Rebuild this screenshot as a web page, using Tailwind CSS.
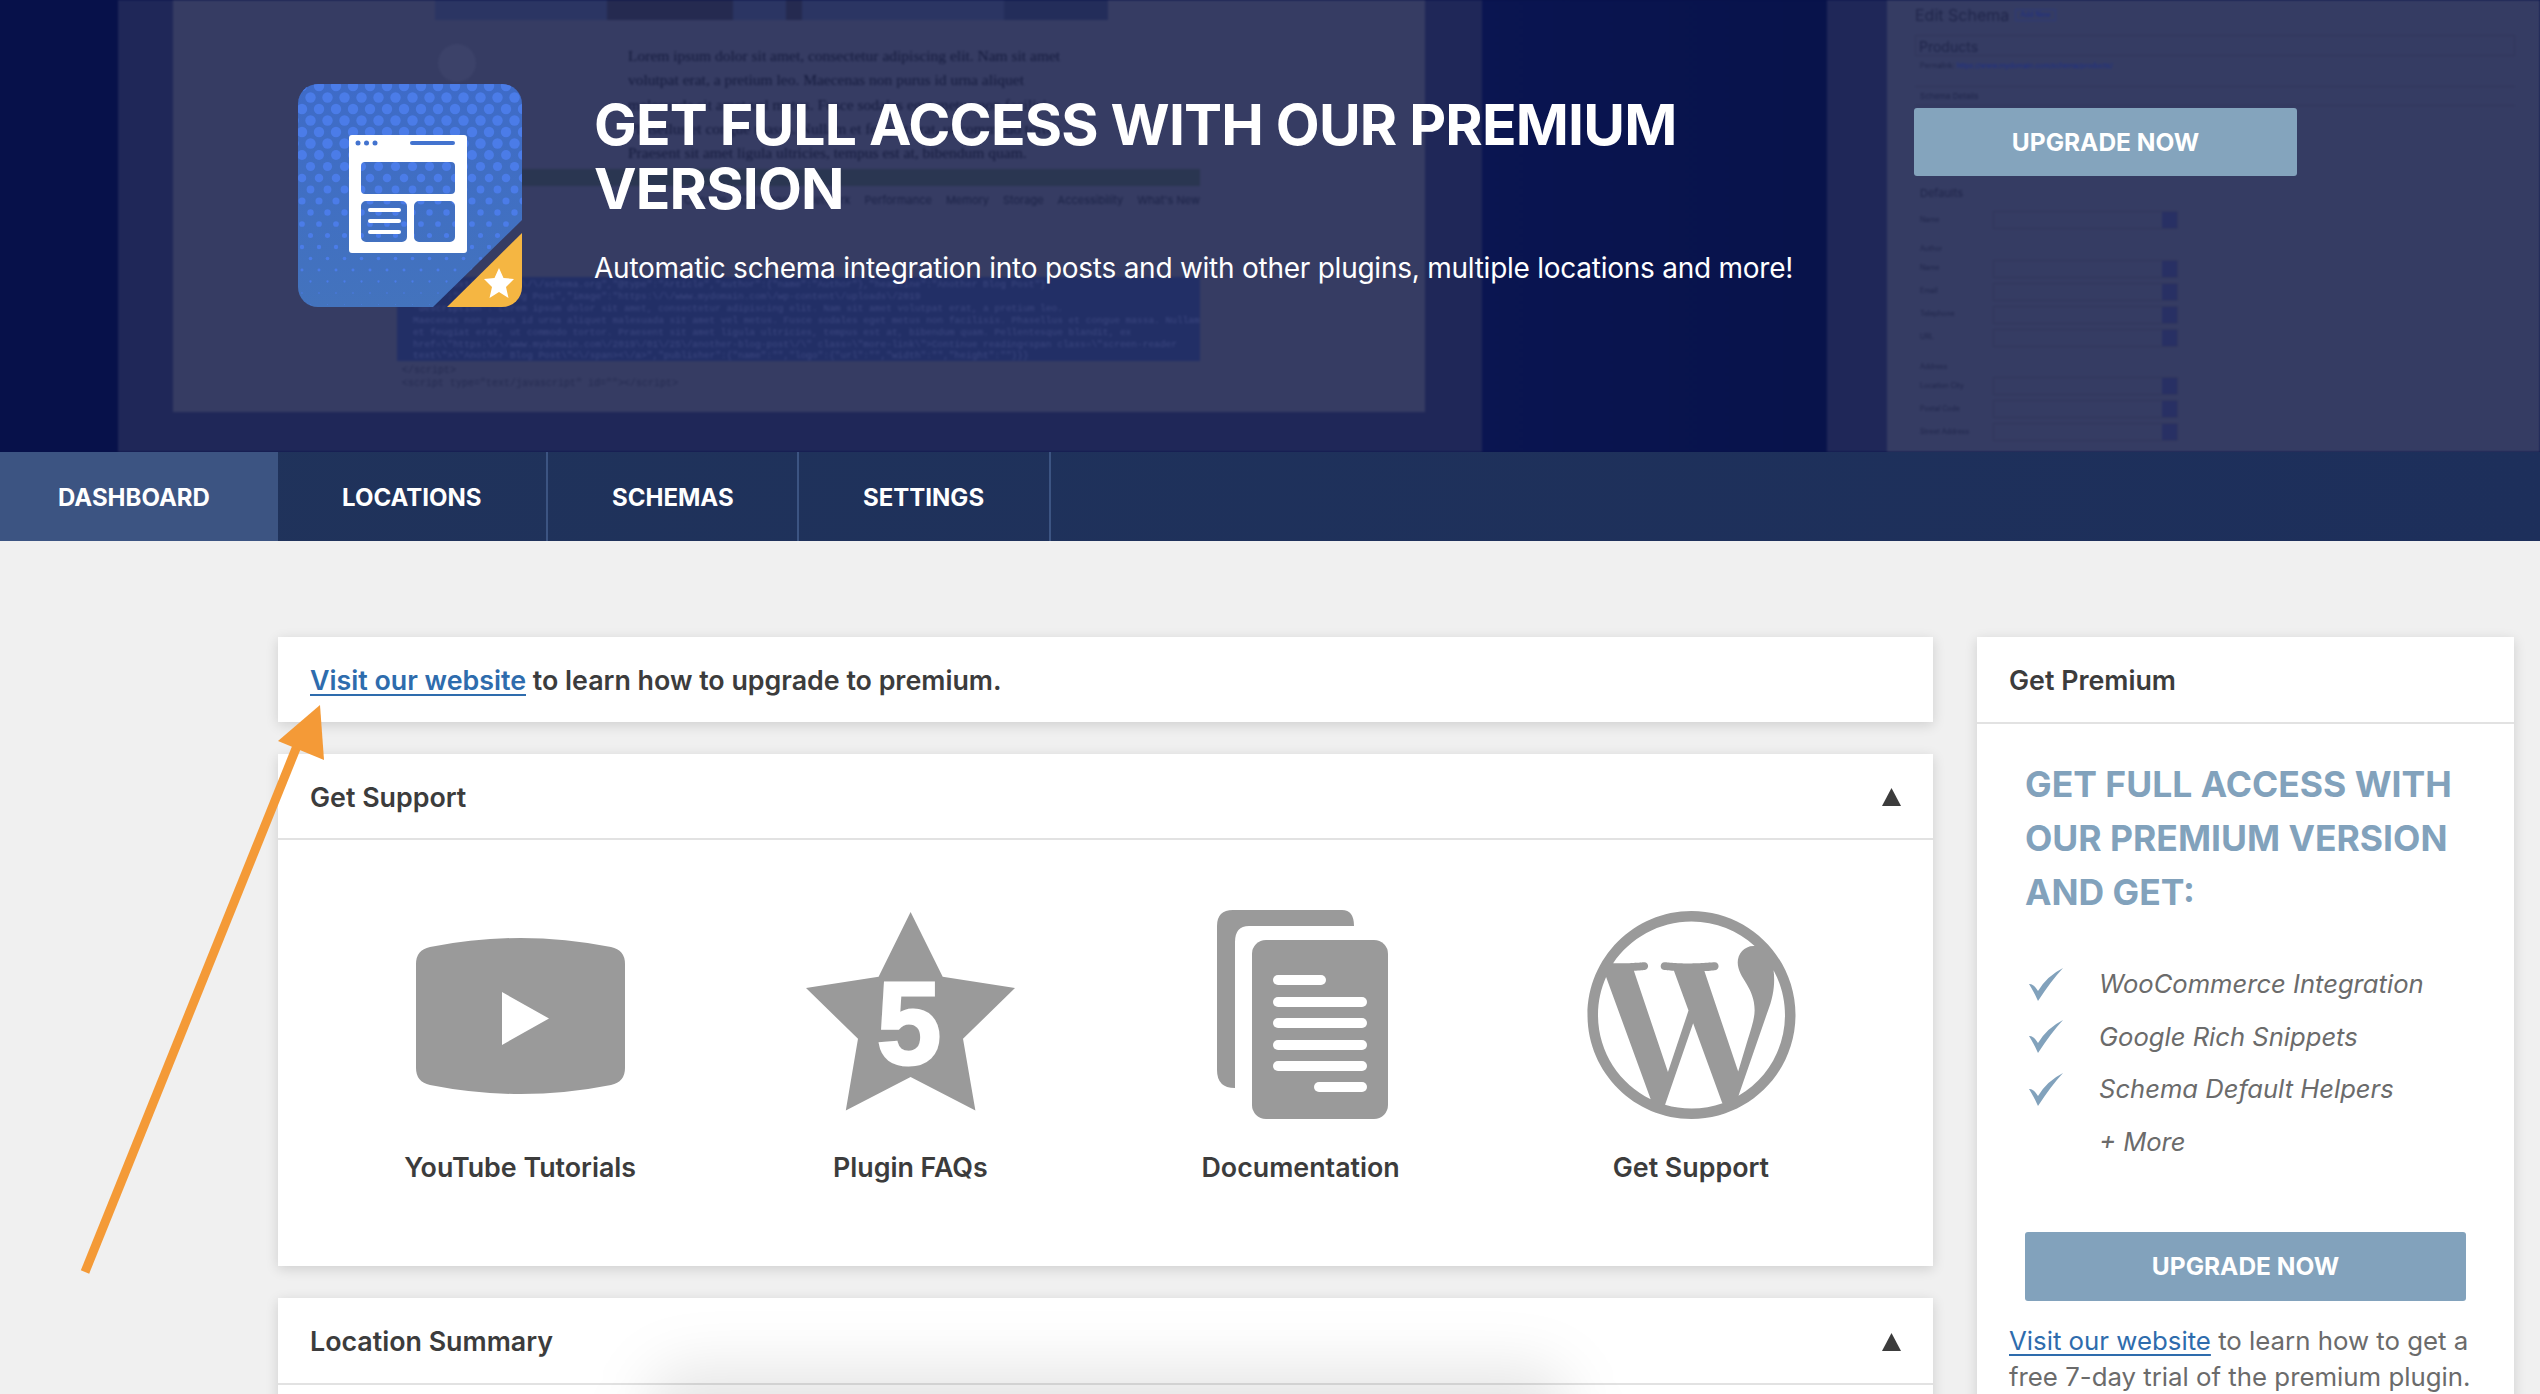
<!DOCTYPE html>
<html lang="en">
<head>
  <meta charset="UTF-8">
  <title>Schema Plugin Dashboard</title>
  <script src="https://cdn.jsdelivr.net/npm/@tailwindcss/browser@4"></script>
</head>
<body class="bg-[#f0f0f0] font-['Inter','Liberation_Sans',sans-serif] text-[#3c3c3c]">
<div class="relative h-[1394px] w-[2540px] overflow-hidden">

  <!-- hero with the dimmed screenshot behind it -->
  <header class="relative h-[452px] overflow-hidden bg-[#07114a]">
    <div class="absolute inset-0 blur-[1px]">
      <div class="absolute left-[118px] top-0 h-full w-[1364px] bg-[#1f2758]"></div>
      <div class="absolute left-[1482px] top-0 h-full w-[345px] bg-gradient-to-r from-[#0a1551] to-[#08134b]"></div>
      <div class="absolute left-[1827px] top-0 h-full w-[60px] bg-[#1f2758]"></div>
      <div class="absolute left-[173px] top-0 h-[412px] w-[1252px] bg-[#363c63]"></div>
      <div class="absolute left-[1887px] top-0 h-full w-[653px] bg-[#353c63]"></div>

      <div class="absolute left-[435px] top-0 flex h-[20px] w-[673px] bg-[#2b3563]">
        <div class="ml-[172px] w-[126px] bg-[#252a50]"></div>
        <div class="ml-[53px] w-[16px] bg-[#252a50]"></div>
        <div class="ml-[202px] w-[104px] bg-[#232d5a]"></div>
      </div>
      <div class="absolute left-[438px] top-[44px] h-[38px] w-[38px] rounded-full bg-[#3c4269]"></div>
      <div class="absolute left-[628px] top-[44px] w-[480px] font-['Liberation_Serif',serif] text-[15.5px] leading-[24.3px] whitespace-nowrap text-[#161c3f]">
        <p>Lorem ipsum dolor sit amet, consectetur adipiscing elit. Nam sit amet</p>
        <p>volutpat erat, a pretium leo. Maecenas non purus id urna aliquet</p>
        <p>malesuada sit amet vel metus. Fusce sodales eget metus non facilisis.</p>
        <p>Phasellus et congue massa. Nullam et feugiat erat, ut commodo tortor.</p>
        <p>Praesent sit amet ligula ultricies, tempus est at, bibendum quam.</p>
      </div>
      <div class="absolute left-[400px] top-[169px] h-[17px] w-[800px] bg-[#2a3651]"></div>
      <div class="absolute left-[520px] top-[192px] flex w-[680px] justify-end gap-[14px] text-[11px] whitespace-nowrap text-[#1c2347]">
        <span>Console</span><span>Debugger</span><span>Network</span><span>Performance</span><span>Memory</span><span>Storage</span><span>Accessibility</span><span>What's New</span>
      </div>
      <div class="absolute left-[397px] top-[277px] h-[84px] w-[803px] overflow-hidden bg-[#222f66] px-[16px] pt-[2px] font-['Liberation_Mono',monospace] text-[9.5px] leading-[11.9px] whitespace-nowrap text-[#3d4880]">
        <p>{"@context":"https:\/\/schema.org","@type":"Article","author":{"name":"Author"},"headline":"Another Blog Post"}</p>
        <p>"name":"Another Blog Post","image":"https:\/\/www.mydomain.com\/wp-content\/uploads\/2019</p>
        <p>"description":"Lorem ipsum dolor sit amet, consectetur adipiscing elit. Nam sit amet volutpat erat, a pretium leo.</p>
        <p>Maecenas non purus id urna aliquet malesuada sit amet vel metus. Fusce sodales eget metus non facilisis. Phasellus et congue massa. Nullam</p>
        <p>et feugiat erat, ut commodo tortor. Praesent sit amet ligula ultricies, tempus est at, bibendum quam. Pellentesque blandit, ex</p>
        <p>href=\"https:\/\/www.mydomain.com\/2019\/01\/25\/another-blog-post\/\" class=\"more-link\"&gt;Continue reading&lt;span class=\"screen-reader</p>
        <p>text\"&gt;\"Another Blog Post\"&lt;\/span&gt;&lt;\/a&gt;","publisher":{"name":"","logo":{"url":"","width":"","height":""}}}</p>
      </div>
      <div class="absolute left-[402px] top-[364px] font-['Liberation_Mono',monospace] text-[10px] leading-[13px] text-[#262c52]">
        <p>&lt;/script&gt;</p>
        <p>&lt;script type="text/javascript" id=""&gt;&lt;/script&gt;</p>
      </div>

      <!-- edit schema form in the right of the backdrop -->
      <div class="absolute left-[1915px] top-[3px] w-[600px] text-[11px] text-[#20264b]">
        <div class="flex items-center gap-[6px]">
          <span class="text-[16px]">Edit Schema</span>
          <span class="border border-[#2d3a78] px-[4px] text-[7px] text-[#1d2f8a]">Add New</span>
        </div>
        <div class="mt-[8px] h-[21px] border border-[#30365b] pl-[3px] text-[14px]">Products</div>
        <div class="mt-[5px] pl-[5px] text-[7px]">Permalink: <span class="text-[#1d2f8a]">https://www.mydomain.com/schema/products/</span></div>
        <div class="mt-[14px] border-y border-[#30365b] py-[3px] pl-[5px] text-[8px]">Schema Details</div>
        <div class="mt-[79px] pl-[5px] text-[11px]">Defaults</div>
        <div class="mt-[10px] flex h-[18px] items-center pl-[5px] text-[7px]"><span class="w-[73px]">Name</span><div class="flex h-full w-[185px] justify-end border border-[#30365b]"><div class="w-[15px] bg-[#283064]"></div></div></div>
        <div class="mt-[15px] pl-[5px] text-[7px]">Author</div>
        <div class="mt-[5px] flex h-[18px] items-center pl-[5px] text-[7px]"><span class="w-[73px]">Name</span><div class="flex h-full w-[185px] justify-end border border-[#30365b]"><div class="w-[15px] bg-[#283064]"></div></div></div>
        <div class="mt-[5px] flex h-[18px] items-center pl-[5px] text-[7px]"><span class="w-[73px]">Email</span><div class="flex h-full w-[185px] justify-end border border-[#30365b]"><div class="w-[15px] bg-[#283064]"></div></div></div>
        <div class="mt-[5px] flex h-[18px] items-center pl-[5px] text-[7px]"><span class="w-[73px]">Telephone</span><div class="flex h-full w-[185px] justify-end border border-[#30365b]"><div class="w-[15px] bg-[#283064]"></div></div></div>
        <div class="mt-[5px] flex h-[18px] items-center pl-[5px] text-[7px]"><span class="w-[73px]">URL</span><div class="flex h-full w-[185px] justify-end border border-[#30365b]"><div class="w-[15px] bg-[#283064]"></div></div></div>
        <div class="mt-[15px] pl-[5px] text-[7px]">Address</div>
        <div class="mt-[5px] flex h-[18px] items-center pl-[5px] text-[7px]"><span class="w-[73px]">Location City</span><div class="flex h-full w-[185px] justify-end border border-[#30365b]"><div class="w-[15px] bg-[#283064]"></div></div></div>
        <div class="mt-[5px] flex h-[18px] items-center pl-[5px] text-[7px]"><span class="w-[73px]">Postal Code</span><div class="flex h-full w-[185px] justify-end border border-[#30365b]"><div class="w-[15px] bg-[#283064]"></div></div></div>
        <div class="mt-[5px] flex h-[18px] items-center pl-[5px] text-[7px]"><span class="w-[73px]">Street Address</span><div class="flex h-full w-[185px] justify-end border border-[#30365b]"><div class="w-[15px] bg-[#283064]"></div></div></div>
      </div>
    </div>

    <div class="relative flex items-start pl-[298px]">
      <svg class="mt-[84px] shrink-0" width="224" height="223" viewBox="0 0 224 223">
        <defs>
          <linearGradient id="logoBg" x1="0" y1="0" x2="0" y2="1">
            <stop offset="0" stop-color="#3e6bc8"/>
            <stop offset="1" stop-color="#4373bd"/>
          </linearGradient>
          <clipPath id="logoCut"><path d="M20 0H204A20 20 0 0 1 224 20V136L135 223H20A20 20 0 0 1 0 203V20A20 20 0 0 1 20 0Z"/></clipPath>
        </defs>
        <g clip-path="url(#logoCut)">
          <rect width="224" height="223" fill="url(#logoBg)"/>
          <g id="logoDots" fill="#4b7ce8"></g>
        </g>
        <path d="M224 149V203A20 20 0 0 1 204 223H149Z" fill="#f5b642"/>
        <path d="M201 184L205.500 194L216 195L208 203L210.500 214L201 208L191.500 214L194 203L186 195L196.500 194Z" fill="#fff"/>
        <path fill="#fff" fill-rule="evenodd" d="M54 51H166A3 3 0 0 1 169 54V166A3 3 0 0 1 166 169H54A3 3 0 0 1 51 166V54A3 3 0 0 1 54 51ZM67 78A4 4 0 0 0 63 82V106A4 4 0 0 0 67 110H153A4 4 0 0 0 157 106V82A4 4 0 0 0 153 78ZM68 117A5 5 0 0 0 63 122V153A5 5 0 0 0 68 158H104A5 5 0 0 0 109 153V122A5 5 0 0 0 104 117ZM121 117A5 5 0 0 0 116 122V153A5 5 0 0 0 121 158H152A5 5 0 0 0 157 153V122A5 5 0 0 0 152 117Z"/>
        <rect x="70" y="124" width="33" height="4" rx="2" fill="#fff"/>
        <rect x="70" y="135" width="33" height="4" rx="2" fill="#fff"/>
        <rect x="70" y="146" width="33" height="4" rx="2" fill="#fff"/>
        <circle cx="60" cy="59" r="2.5" fill="#4373cf"/>
        <circle cx="68.500" cy="59" r="2.5" fill="#4373cf"/>
        <circle cx="77" cy="59" r="2.5" fill="#4373cf"/>
        <rect x="112" y="57" width="45" height="4" rx="2" fill="#4373cf"/>
      </svg>
      <div class="ml-[72px] w-[1240px] shrink-0 pt-[93px]">
        <h1 class="w-[1150px] text-[57px] leading-[64px] font-bold tracking-[-0.8px] text-white">GET FULL ACCESS WITH OUR PREMIUM VERSION</h1>
        <p class="mt-[29px] text-[28px] leading-[36px] tracking-[-0.25px] whitespace-nowrap text-white">Automatic schema integration into posts and with other plugins, multiple locations and more!</p>
      </div>
      <a class="mt-[108px] ml-[80px] flex h-[68px] w-[383px] shrink-0 items-center justify-center rounded-[3px] bg-[#84a4bd] pt-[1px] text-[24.5px] font-bold text-white">UPGRADE NOW</a>
    </div>
  </header>

  <nav class="flex h-[89px] bg-gradient-to-r from-[#20335b] to-[#1d2f5b] text-[24px] font-bold text-white">
    <a class="flex w-[278px] items-center border-r-2 border-[#3c5482] bg-[#3c5482] pt-[2px] pl-[58px]">DASHBOARD</a>
    <a class="flex w-[270px] items-center border-r-2 border-[#3c5482] pt-[2px] pl-[64px]">LOCATIONS</a>
    <a class="flex w-[251px] items-center border-r-2 border-[#3c5482] pt-[2px] pl-[64px]">SCHEMAS</a>
    <a class="flex w-[252px] items-center border-r-2 border-[#3c5482] pt-[2px] pl-[64px]">SETTINGS</a>
  </nav>

  <main class="flex items-start gap-[45px] pt-[96px] pl-[278px]">
    <div class="w-[1655px] shrink-0">
      <div class="flex h-[85px] items-center bg-white pt-[2px] pl-[32px] text-[26.800px] font-semibold shadow-[0_3px_12px_rgba(0,0,0,0.14)]">
        <p><a class="text-[#2e6cad] underline underline-offset-[4px]">Visit our website</a> to learn how to upgrade to premium.</p>
      </div>

      <section class="mt-[32px] h-[512px] bg-white shadow-[0_3px_12px_rgba(0,0,0,0.14)]">
        <div class="flex h-[86px] items-center justify-between border-b-2 border-[#e2e2e2] pt-[2px] pr-[32px] pl-[32px]">
          <h2 class="text-[26.800px] font-semibold">Get Support</h2>
          <svg width="19" height="18" viewBox="0 0 19 18"><path d="M9.500 0L19 18H0Z" fill="#3c3c3c"/></svg>
        </div>
        <div class="grid grid-cols-4 px-[47px] pt-[70px] text-center text-[26.800px] font-semibold">
          <div class="flex flex-col items-center">
            <div class="flex h-[209px] items-center">
              <svg class="mt-[2px]" width="209" height="156" viewBox="0 0 209 156">
                <path fill="#9a9a9a" fill-rule="evenodd" d="M14 9Q60 0 104.500 0T195 9Q209 12 209 26V130Q209 144 195 147Q150 156 104.500 156T14 147Q0 144 0 130V26Q0 12 14 9ZM86 54V107L133 80.500Z"/>
              </svg>
            </div>
            <p class="mt-[28px]">YouTube Tutorials</p>
          </div>
          <div class="flex flex-col items-center">
            <div class="flex h-[209px] items-center">
              <svg class="mb-[6px]" width="209" height="199" viewBox="0 0 209 199">
                <path fill="#9a9a9a" d="M104.600 0L136.700 64.800L209 76L157 126.800L169.400 198.500L104.600 165L39.800 198.500L52 126.800L0 76L72.600 64.800Z"/>
                <text x="103" y="152" text-anchor="middle" fill="#fff" stroke="#fff" stroke-width="3" font-family="Liberation Sans" font-weight="700" font-size="116">5</text>
              </svg>
            </div>
            <p class="mt-[28px]">Plugin FAQs</p>
          </div>
          <div class="flex flex-col items-center">
            <div class="flex h-[209px] items-center">
              <svg class="ml-[3px]" width="171" height="209" viewBox="0 0 171 209">
                <path fill="#9a9a9a" d="M16 0H125Q137 0 137 16H32Q18 16 18 32V178Q0 178 0 160V16Q0 0 16 0Z"/>
                <path fill="#9a9a9a" fill-rule="evenodd" d="M49 30H157A14 14 0 0 1 171 44V195A14 14 0 0 1 157 209H49A14 14 0 0 1 35 195V44A14 14 0 0 1 49 30Z"/>
                <g fill="#fff">
                  <rect x="56" y="65" width="53" height="10" rx="5"/>
                  <rect x="56" y="87" width="94" height="10" rx="5"/>
                  <rect x="56" y="108" width="94" height="10" rx="5"/>
                  <rect x="56" y="130" width="94" height="10" rx="5"/>
                  <rect x="56" y="151" width="94" height="10" rx="5"/>
                  <rect x="97" y="172" width="53" height="10" rx="5"/>
                </g>
              </svg>
            </div>
            <p class="mt-[28px]">Documentation</p>
          </div>
          <div class="flex flex-col items-center">
            <div class="flex h-[209px] items-center">
              <svg class="ml-[2px]" width="209" height="208" viewBox="0 0 24 24">
                <path fill="#9a9a9a" d="M21.469 6.825c.84 1.537 1.318 3.3 1.318 5.175 0 3.979-2.156 7.456-5.363 9.325l3.295-9.527c.615-1.54.82-2.771.82-3.864 0-.405-.026-.78-.07-1.11m-7.981.105c.647-.03 1.232-.105 1.232-.105.582-.075.514-.93-.067-.899 0 0-1.755.135-2.88.135-1.064 0-2.85-.15-2.85-.15-.585-.03-.661.855-.075.885 0 0 .54.061 1.125.09l1.68 4.605-2.37 7.08L5.354 6.9c.649-.03 1.234-.1 1.234-.1.585-.075.516-.93-.065-.896 0 0-1.746.138-2.874.138-.2 0-.438-.008-.69-.015C4.911 3.15 8.235 1.215 12 1.215c2.809 0 5.365 1.072 7.286 2.833-.046-.003-.091-.009-.141-.009-1.06 0-1.812.923-1.812 1.914 0 .89.513 1.643 1.06 2.531.411.72.89 1.643.89 2.977 0 .915-.354 1.994-.821 3.479l-1.075 3.585-3.9-11.61.001.014zM12 22.784c-1.059 0-2.081-.153-3.048-.437l3.237-9.406 3.315 9.087c.024.053.05.101.078.149-1.12.393-2.325.609-3.582.609M1.211 12c0-1.564.336-3.05.935-4.39L7.29 21.709C3.694 19.96 1.212 16.271 1.211 12M12 0C5.385 0 0 5.385 0 12s5.385 12 12 12 12-5.385 12-12S18.615 0 12 0"/>
              </svg>
            </div>
            <p class="mt-[28px]">Get Support</p>
          </div>
        </div>
      </section>

      <section class="relative mt-[32px] h-[300px] overflow-hidden bg-white shadow-[0_3px_12px_rgba(0,0,0,0.14)]">
        <div class="flex h-[87px] items-center justify-between border-b-2 border-[#e2e2e2] pt-[2px] pr-[32px] pl-[32px]">
          <h2 class="text-[26.800px] font-semibold">Location Summary</h2>
          <svg width="19" height="18" viewBox="0 0 19 18"><path d="M9.500 0L19 18H0Z" fill="#3c3c3c"/></svg>
        </div>
        <div class="absolute top-[70px] left-[370px] h-[200px] w-[920px] rounded-[40px] bg-black/10 blur-[30px]"></div>
      </section>
    </div>

    <aside class="-ml-[1px] w-[537px] shrink-0 bg-white pb-[40px] shadow-[0_3px_12px_rgba(0,0,0,0.14)]">
      <h2 class="flex h-[87px] items-center border-b-2 border-[#e2e2e2] pt-[2px] pl-[32px] text-[26.800px] font-semibold">Get Premium</h2>
      <div class="pt-[34px] pr-[32px] pl-[32px]">
        <h3 class="pl-[16px] text-[35.500px] leading-[54px] font-bold text-[#82a2bc]">GET FULL ACCESS WITH OUR PREMIUM VERSION AND GET:</h3>
        <ul class="mt-[38px] pl-[20px] text-[25.600px] leading-[52.5px] italic text-[#6b6b6b]">
          <li class="flex items-center gap-[36px]">
            <svg class="shrink-0" width="34" height="33" viewBox="0 0 34 33"><path fill="#82a2bc" d="M0 16Q4 15 9 23Q18 8 34 0Q22 13 9 33Q5 24 0 16Z"/></svg>
            <span>WooCommerce Integration</span>
          </li>
          <li class="flex items-center gap-[36px]">
            <svg class="shrink-0" width="34" height="33" viewBox="0 0 34 33"><path fill="#82a2bc" d="M0 16Q4 15 9 23Q18 8 34 0Q22 13 9 33Q5 24 0 16Z"/></svg>
            <span>Google Rich Snippets</span>
          </li>
          <li class="flex items-center gap-[36px]">
            <svg class="shrink-0" width="34" height="33" viewBox="0 0 34 33"><path fill="#82a2bc" d="M0 16Q4 15 9 23Q18 8 34 0Q22 13 9 33Q5 24 0 16Z"/></svg>
            <span>Schema Default Helpers</span>
          </li>
          <li class="pl-[70px]">+ More</li>
        </ul>
        <a class="mt-[64px] ml-[16px] flex h-[69px] w-[441px] items-center justify-center rounded-[3px] bg-[#82a2bc] text-[24.500px] font-bold text-white">UPGRADE NOW</a>
        <p class="mt-[22px] text-[25.800px] leading-[36px] text-[#6b6b6b]"><a class="text-[#2e6cad] underline underline-offset-[4px]">Visit our website</a> to learn how to get a free 7-day trial of the premium plugin.</p>
      </div>
    </aside>
  </main>

  <!-- orange annotation arrow drawn over the page -->
  <svg class="absolute top-0 left-0" width="2540" height="1394" viewBox="0 0 2540 1394">
    <path d="M85 1272L297 746" stroke="#f49a37" stroke-width="9" fill="none"/>
    <path d="M320 705L278 741L324 760Z" fill="#f49a37"/>
  </svg>
</div>

<script>
  // halftone dots of the logo, shrinking towards the bottom
  const dots = document.getElementById('logoDots');
  for (let row = 0; row < 20; row++) {
    const y = row * 11.5;
    const r = Math.max(0.4, 5.2 - Math.max(0, y - 60) * 0.03);
    for (let col = -1; col < 15; col++) {
      const c = document.createElementNS('http://www.w3.org/2000/svg', 'circle');
      c.setAttribute('cx', col * 17 + (row % 2 ? 8.5 : 0) + 4);
      c.setAttribute('cy', y + 2);
      c.setAttribute('r', r);
      dots.appendChild(c);
    }
  }
</script>
</body>
</html>
